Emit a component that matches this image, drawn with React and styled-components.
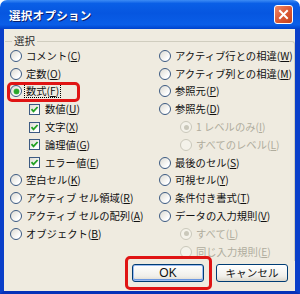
import styled, { createGlobalStyle } from "styled-components";

const GlobalStyle = createGlobalStyle`
  html, body {
    margin: 0;
    padding: 0;
    background: #ffffff;
  }
  body {
    font-family: "Noto Sans CJK JP", "Noto Sans", sans-serif;
  }
`;

const Window = styled.div`
  position: relative;
  width: 300px;
  height: 294px;
  display: flex;
  flex-direction: column;
  box-sizing: border-box;
`;

const TitleBar = styled.div`
  height: 29px;
  flex-shrink: 0;
  border-radius: 7px 7px 0 0;
  background: linear-gradient(
    to bottom,
    #3d8cf5 0%,
    #0a5fe6 12%,
    #0656e0 45%,
    #0a5ee8 85%,
    #0042cc 100%
  );
  display: flex;
  align-items: center;
  justify-content: space-between;
  padding: 0 7px 0 9px;
  box-sizing: border-box;
`;

const Title = styled.span`
  color: #ffffff;
  font-size: 11.5px;
  font-weight: 700;
  text-shadow: 1px 1px 0 #0a1e6e;
  letter-spacing: 0.3px;
`;

const CloseButton = styled.div`
  width: 19px;
  height: 19px;
  box-sizing: border-box;
  border: 1px solid #ffffff;
  border-radius: 3px;
  background: linear-gradient(135deg, #f08a68 0%, #dc5a36 50%, #c2401c 100%);
  display: flex;
  align-items: center;
  justify-content: center;
`;

const Frame = styled.div`
  flex: 1;
  display: flex;
  flex-direction: column;
  background: #efebe0;
  border-left: 4px solid #0a3fc9;
  border-right: 5px solid #0a3fc9;
  border-bottom: 3px solid #0631b8;
`;

const Group = styled.fieldset`
  margin: 6px 3px 0 1px;
  padding: 0 0 0 5px;
  border: none;
  border-top: 1px solid #d0cdbf;
  border-right: 1px solid #d0cdbf;
  border-radius: 0 3px 0 0;
  display: grid;
  grid-template-columns: 149px 1fr;
`;

const Legend = styled.legend`
  font-size: 10.5px;
  line-height: 12px;
  color: #2a2a2a;
  padding: 0 2px;
  margin-left: 2px;
`;

const Column = styled.div`
  display: flex;
  flex-direction: column;
`;

const Row = styled.div`
  height: 17.8px;
  display: flex;
  align-items: center;
  padding-left: ${(p) => p.$indent || 0}px;
`;

const Radio = styled.span`
  width: 12px;
  height: 12px;
  box-sizing: border-box;
  flex-shrink: 0;
  border-radius: 50%;
  border: 1px solid ${(p) => (p.$disabled ? "#cac8bb" : "#3c5a82")};
  background: ${(p) =>
    p.$disabled
      ? "#f4f2ea"
      : "linear-gradient(135deg, #dcdad2 0%, #ffffff 75%)"};
  display: flex;
  align-items: center;
  justify-content: center;
  margin-right: 3px;

  &::after {
    content: "";
    display: ${(p) => (p.$checked ? "block" : "none")};
    width: 5px;
    height: 5px;
    border-radius: 50%;
    background: ${(p) => (p.$disabled ? "#cac8bb" : "#2aa62a")};
    box-shadow: ${(p) => (p.$disabled ? "none" : "0 0 0 0.5px #5fc95f")};
  }
`;

const Check = styled.span`
  width: 11px;
  height: 11px;
  box-sizing: border-box;
  flex-shrink: 0;
  border: 1px solid #3c5a82;
  background: linear-gradient(135deg, #dcdad2 0%, #ffffff 75%);
  display: flex;
  align-items: center;
  justify-content: center;
  margin-right: 4px;
`;

const Label = styled.span`
  font-size: 10.3px;
  line-height: 12px;
  white-space: nowrap;
  color: ${(p) => (p.$disabled ? "#b0ad9e" : "#111111")};
  outline: ${(p) => (p.$focus ? "1px dotted #000000" : "none")};
  padding: 0 1px;
`;

const ButtonRow = styled.div`
  display: flex;
  justify-content: flex-end;
  gap: 12px;
  margin-top: 3px;
  padding-right: 7px;
`;

const Button = styled.div`
  width: 72px;
  height: 18px;
  box-sizing: border-box;
  border: 1px solid #003c74;
  border-radius: 3px;
  background: linear-gradient(to bottom, #ffffff 0%, #f0efea 70%, #dcd8cc 100%);
  box-shadow: ${(p) =>
    p.$default ? "inset 0 0 0 1px #9dbcf0, inset 0 -1px 0 1px #6b97e0" : "none"};
  display: flex;
  align-items: center;
  justify-content: center;
  font-size: ${(p) => (p.$latin ? "12px" : "10.6px")};
  font-family: ${(p) =>
    p.$latin ? '"Liberation Sans", sans-serif' : '"Noto Sans CJK JP", sans-serif'};
  color: #111111;
`;

const Highlight = styled.div`
  position: absolute;
  box-sizing: border-box;
  border: 3px solid #e01414;
  border-radius: 5px;
  pointer-events: none;
`;

function CheckMark() {
  return (
    <svg width="9" height="9" viewBox="0 0 9 9">
      <polyline
        points="1.5,4.2 3.5,6.4 7.6,2"
        fill="none"
        stroke="#21a121"
        strokeWidth="1.8"
      />
    </svg>
  );
}

function Text({ text, mn, disabled, focus }) {
  return (
    <Label $disabled={disabled} $focus={focus}>
      {text}(<u>{mn}</u>)
    </Label>
  );
}

const leftItems = [
  { text: "コメント", mn: "C" },
  { text: "定数", mn: "O" },
  { text: "数式", mn: "F", checked: true, focus: true },
  { text: "数値", mn: "U", box: true },
  { text: "文字", mn: "X", box: true },
  { text: "論理値", mn: "G", box: true },
  { text: "エラー値", mn: "E", box: true },
  { text: "空白セル", mn: "K" },
  { text: "アクティブ セル領域", mn: "R" },
  { text: "アクティブ セルの配列", mn: "A" },
  { text: "オブジェクト", mn: "B" },
];

const rightItems = [
  { text: "アクティブ行との相違", mn: "W" },
  { text: "アクティブ列との相違", mn: "M" },
  { text: "参照元", mn: "P" },
  { text: "参照先", mn: "D" },
  { text: "1 レベルのみ", mn: "I", sub: true, checked: true },
  { text: "すべてのレベル", mn: "L", sub: true },
  { text: "最後のセル", mn: "S" },
  { text: "可視セル", mn: "Y" },
  { text: "条件付き書式", mn: "T" },
  { text: "データの入力規則", mn: "V" },
  { text: "すべて", mn: "L", sub: true, checked: true },
  { text: "同じ入力規則", mn: "E", sub: true },
];

function Item({ item }) {
  if (item.box) {
    return (
      <Row $indent={19}>
        <Check>
          <CheckMark />
        </Check>
        <Text text={item.text} mn={item.mn} />
      </Row>
    );
  }
  return (
    <Row $indent={item.sub ? 21 : 0}>
      <Radio $checked={item.checked} $disabled={item.sub} />
      <Text
        text={item.text}
        mn={item.mn}
        disabled={item.sub}
        focus={item.focus}
      />
    </Row>
  );
}

export default function App() {
  return (
    <>
      <GlobalStyle />
      <Window>
        <TitleBar>
          <Title>選択オプション</Title>
          <CloseButton>
            <svg width="11" height="11" viewBox="0 0 11 11">
              <path
                d="M2 2 L9 9 M9 2 L2 9"
                stroke="#ffffff"
                strokeWidth="2"
                strokeLinecap="square"
              />
            </svg>
          </CloseButton>
        </TitleBar>
        <Frame>
          <Group>
            <Legend>選択</Legend>
            <Column>
              {leftItems.map((item) => (
                <Item key={item.text} item={item} />
              ))}
            </Column>
            <Column>
              {rightItems.map((item) => (
                <Item key={item.text} item={item} />
              ))}
            </Column>
          </Group>
          <ButtonRow>
            <Button $default $latin>
              OK
            </Button>
            <Button>キャンセル</Button>
          </ButtonRow>
        </Frame>
        <Highlight style={{ left: 7, top: 82, width: 73, height: 20 }} />
        <Highlight style={{ left: 125, top: 256, width: 87, height: 34 }} />
      </Window>
    </>
  );
}
